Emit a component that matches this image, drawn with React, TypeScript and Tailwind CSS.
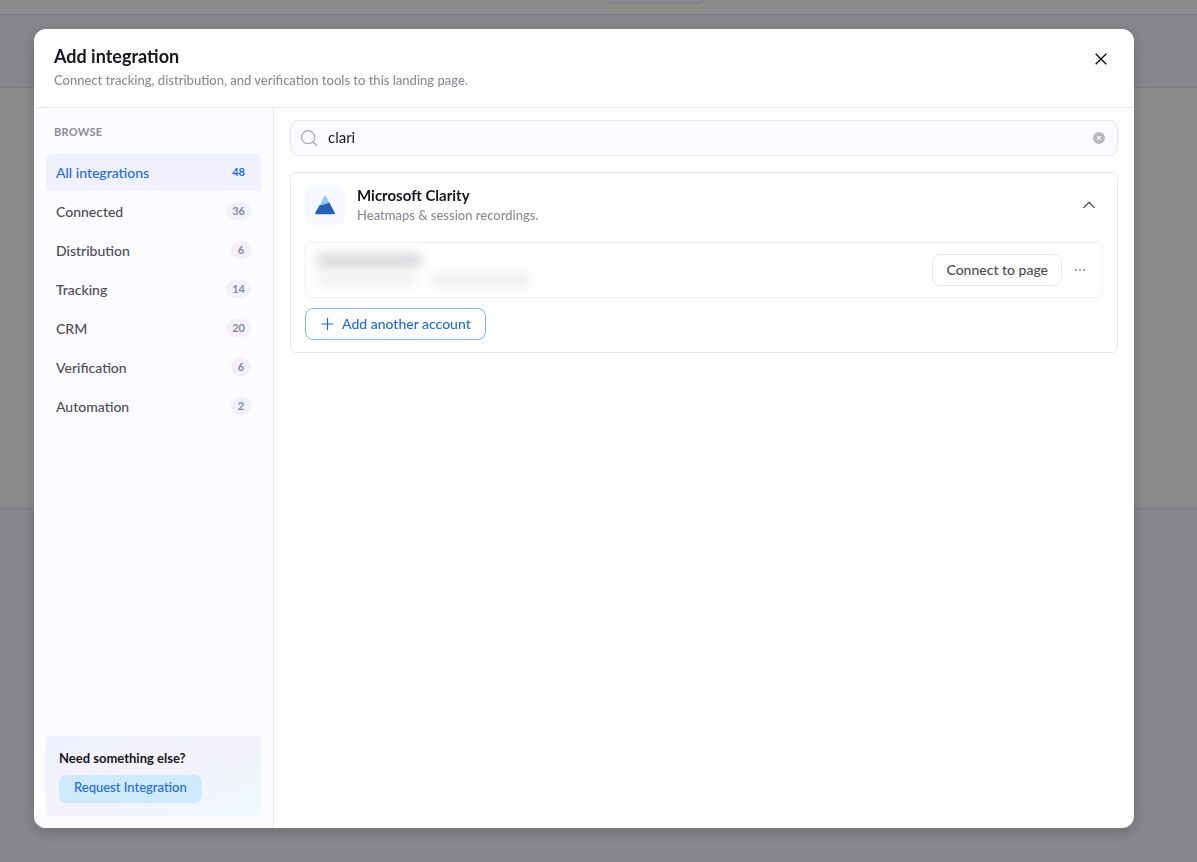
import React, { useState } from "react";

const categories = [
  { name: "All integrations", count: 48 },
  { name: "Connected", count: 36 },
  { name: "Distribution", count: 6 },
  { name: "Tracking", count: 14 },
  { name: "CRM", count: 20 },
  { name: "Verification", count: 6 },
  { name: "Automation", count: 2 },
];

function ClarityLogo() {
  return (
    <svg width="20" height="20" viewBox="0 0 20 20" aria-hidden="true">
      <path d="M9.1 1.3Q10 0 10.9 1.3L15.4 9.6 4.6 11Z" fill="#8cc8f2" />
      <path d="M4.6 10.2 8.6 9.8 14.4 7.6 19.6 17.4Q20.4 19.2 18.6 19.2H1.4Q-.4 19.2.4 17.4Z" fill="#2460b8" />
    </svg>
  );
}

export default function App() {
  const [active, setActive] = useState("All integrations");
  const [query, setQuery] = useState("clari");
  const [expanded, setExpanded] = useState(true);

  return (
    <div className="font-[Lato,sans-serif]">
      {/* Page behind the dialog */}
      <div className="flex h-screen flex-col bg-[#f5f4fd]" aria-hidden="true">
        <div className="flex h-[15px] items-start justify-center border-b border-[#e4e3ec] bg-white pl-28">
          <div className="h-1 w-24 rounded-b-md border border-t-0 border-[#e6e5ee] bg-[#f8f7fc]" />
        </div>
        <div className="h-[72px]" />
        <div className="h-[422px] border-y border-[#e6e5ee] bg-white" />
      </div>

      <div className="fixed inset-0 flex bg-black/45 pt-[29px] pr-[63px] pb-[34px] pl-[34px]">
        <div
          role="dialog"
          aria-labelledby="dialog-title"
          className="flex flex-1 flex-col overflow-hidden rounded-xl bg-white shadow-[0_4px_16px_rgba(0,0,0,0.2)]"
        >
          <header className="flex items-start justify-between border-b border-[#ecebf3] px-5 py-4">
            <div>
              <h1 id="dialog-title" className="text-lg leading-[22px] font-bold text-[#17171c]">
                Add integration
              </h1>
              <p className="mt-0.5 text-[13px] leading-[22px] font-medium text-[#8c8b94]">
                Connect tracking, distribution, and verification tools to this landing page.
              </p>
            </div>
            <button type="button" aria-label="Close" className="px-[7px] py-2 text-black">
              <svg width="12" height="12" viewBox="0 0 12 12" fill="none" stroke="currentColor" strokeWidth="1.3">
                <path d="M.7 .7 11.3 11.3M11.3 .7 .7 11.3" />
              </svg>
            </button>
          </header>

          <div className="flex min-h-0 flex-1">
            <aside className="flex w-60 shrink-0 flex-col border-r border-[#ebeaf5] bg-[#fcfbff] p-3">
              <h2 className="mt-1 mb-3.5 px-2 text-[11px] leading-4 font-bold tracking-wide text-[#8c8b94]">
                BROWSE
              </h2>
              <nav className="flex flex-col gap-0.5">
                {categories.map((c) => (
                  <button
                    key={c.name}
                    type="button"
                    onClick={() => setActive(c.name)}
                    className={`flex h-[37px] items-center justify-between rounded px-2.5 text-sm font-medium ${
                      active === c.name ? "bg-[#f1f0fe] text-[#1a6ee0]" : "text-[#4d4c54]"
                    }`}
                  >
                    <span>{c.name}</span>
                    <span
                      className={`mb-0.5 min-w-5 rounded-full bg-[#f1f0fb] px-1.5 text-center text-[11px] leading-[18px] font-bold ${
                        active === c.name ? "text-[#1a6ee0]" : "text-[#8c8b94]"
                      }`}
                    >
                      {c.count}
                    </span>
                  </button>
                ))}
              </nav>
              <div className="mt-auto rounded bg-linear-to-br from-[#eef2fe] via-[#f4f2fd] to-[#eefafd] p-[13px]">
                <p className="text-[13px] leading-[18px] font-bold text-[#17171c]">Need something else?</p>
                <button
                  type="button"
                  className="mt-2 flex h-7 items-center rounded-lg bg-[#cfe9fd] px-[15px] pb-0.5 text-[13px] font-medium text-[#1f6be0]"
                >
                  Request Integration
                </button>
              </div>
            </aside>

            <main className="flex-1 px-4 pt-3">
              <div className="flex h-9 items-center rounded-lg border border-[#e8e6f6] bg-[#fbfaff] px-2.5">
                <svg width="16" height="16" viewBox="0 0 16 16" fill="none" stroke="#a3a2aa" strokeWidth="1.1" aria-hidden="true">
                  <circle cx="7.2" cy="7.2" r="6.6" />
                  <path d="m12 12 3.7 3.7" />
                </svg>
                <input
                  type="text"
                  aria-label="Search integrations"
                  value={query}
                  onChange={(e) => setQuery(e.target.value)}
                  className="ml-[11px] min-w-0 flex-1 bg-transparent pb-0.5 text-[15px] text-[#17171c] outline-none"
                />
                <button type="button" aria-label="Clear search" onClick={() => setQuery("")} className="px-0.5">
                  <svg width="12" height="12" viewBox="0 0 12 12" fill="none">
                    <circle cx="6" cy="6" r="6" fill="#b9b8bd" />
                    <path d="m4.2 4.2 3.6 3.6m0-3.6L4.2 7.8" stroke="#fff" strokeWidth="1.2" />
                  </svg>
                </button>
              </div>

              <section className="mt-4 rounded-md border border-[#e8e6f6] px-3.5 py-3">
                <div className="flex items-center">
                  <div className="flex size-10 items-center justify-center rounded-lg bg-[#f8f8ff]">
                    <ClarityLogo />
                  </div>
                  <div className="ml-3 flex-1">
                    <h3 className="text-[15px] leading-5 font-bold text-[#17171c]">Microsoft Clarity</h3>
                    <p className="text-[13px] leading-5 font-medium text-[#8c8b94]">Heatmaps &amp; session recordings.</p>
                  </div>
                  <button
                    type="button"
                    aria-label="Toggle accounts"
                    aria-expanded={expanded}
                    onClick={() => setExpanded(!expanded)}
                    className="p-2 text-[#3c3b43]"
                  >
                    <svg width="12" height="12" viewBox="0 0 12 12" fill="none" stroke="currentColor" strokeWidth="1.1">
                      <path d="M.5 8.8 6 3.3l5.5 5.5" />
                    </svg>
                  </button>
                </div>

                {expanded && (
                  <>
                    <div className="mt-[17px] flex h-14 items-center rounded-md border border-[#f1f0f6] pr-3 pl-2.5">
                      {/* Account details stay hidden */}
                      <div className="flex-1 select-none" aria-hidden="true">
                        <div className="h-4 w-[106px] rounded-md bg-[#dadadc] blur-[6px]" />
                        <div className="mt-1 flex gap-3">
                          <div className="h-3.5 w-[102px] rounded-md bg-[#f2f2f4] blur-[6px]" />
                          <div className="h-3.5 w-[102px] rounded-md bg-[#ededef] blur-[6px]" />
                        </div>
                      </div>
                      <button
                        type="button"
                        className="h-8 rounded-lg border border-[#e8e6f6] bg-white px-[13px] text-sm font-medium text-[#4d4c54]"
                      >
                        Connect to page
                      </button>
                      <button type="button" aria-label="More options" className="py-2 pr-1 pl-3">
                        <svg width="12" height="4" viewBox="0 0 12 4" fill="#85848c">
                          <circle cx="2" cy="2" r="1" />
                          <circle cx="6" cy="2" r="1" />
                          <circle cx="10" cy="2" r="1" />
                        </svg>
                      </button>
                    </div>
                    <button
                      type="button"
                      className="mt-2.5 flex h-8 items-center gap-2 rounded-lg border border-[#7db8f2] px-3.5 text-sm font-medium text-[#1f6be0]"
                    >
                      <svg width="14" height="14" viewBox="0 0 14 14" fill="none" stroke="currentColor" strokeWidth="1.2" aria-hidden="true">
                        <path d="M7.5 1v12M1.5 7h12" />
                      </svg>
                      Add another account
                    </button>
                  </>
                )}
              </section>
            </main>
          </div>
        </div>
      </div>
    </div>
  );
}
